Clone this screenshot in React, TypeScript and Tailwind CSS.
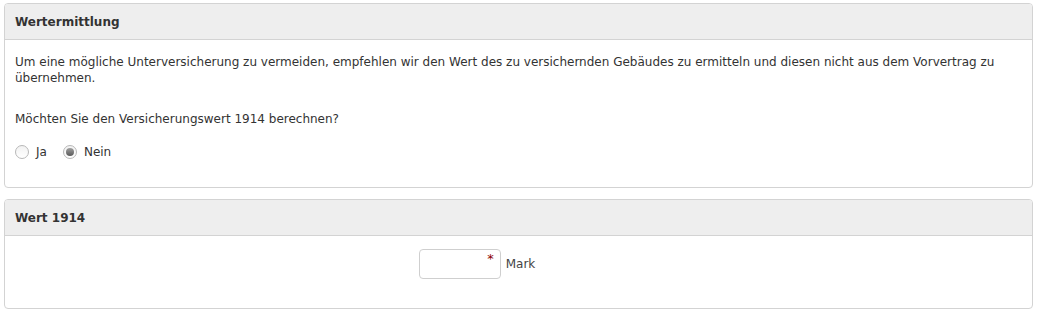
import React from 'react';

const Radio: React.FC<{ checked?: boolean; label: string }> = ({ checked, label }) => (
  <label className="flex items-center gap-[7px]">
    <span className="w-[14px] h-[14px] rounded-full border border-[#b8b8b8] bg-gradient-to-b from-[#f2f2f2] to-[#ffffff] flex items-center justify-center">
      {checked && (
        <span className="w-[8px] h-[8px] rounded-full bg-gradient-to-b from-[#a0a0a0] to-[#5a5a5a]" />
      )}
    </span>
    <span>{label}</span>
  </label>
);

const App: React.FC = () => {
  return (
    <div className="w-[1039px] h-[315px] bg-white pl-[4px] pr-[6px] pt-[3px] text-[12px] leading-[16px] text-[#333]" style={{ fontFamily: '"DejaVu Sans", Verdana, sans-serif' }}>
      <div className="border border-[#d3d3d3] rounded-[4px] overflow-hidden">
        <div className="h-[36px] bg-[#eeeeee] border-b border-[#d3d3d3] px-[10px] flex items-center font-bold">
          Wertermittlung
        </div>
        <div className="px-[10px] pt-[14px] pb-[27px]">
          <p>
            Um eine mögliche Unterversicherung zu vermeiden, empfehlen wir den Wert des zu versichernden Gebäudes zu ermitteln und diesen nicht aus dem Vorvertrag zu übernehmen.
          </p>
          <p className="mt-[25px]">Möchten Sie den Versicherungswert 1914 berechnen?</p>
          <div className="mt-[17px] flex items-center gap-[16px]">
            <Radio label="Ja" />
            <Radio checked label="Nein" />
          </div>
        </div>
      </div>
      <div className="mt-[11px] border border-[#d3d3d3] rounded-[4px] overflow-hidden">
        <div className="h-[36px] bg-[#eeeeee] border-b border-[#d3d3d3] px-[10px] flex items-center font-bold">
          Wert 1914
        </div>
        <div className="h-[72px] flex items-start justify-center gap-[5px] pt-[13px] pr-[83px]">
          <div className="relative w-[82px] h-[30px] border border-[#cfcfcf] rounded-[4px]">
            <span className="absolute right-[6px] top-[1px] text-[#8b0000] text-[13px]">*</span>
          </div>
          <span className="text-[#444] leading-[30px]">Mark</span>
        </div>
      </div>
    </div>
  );
};

export default App;
